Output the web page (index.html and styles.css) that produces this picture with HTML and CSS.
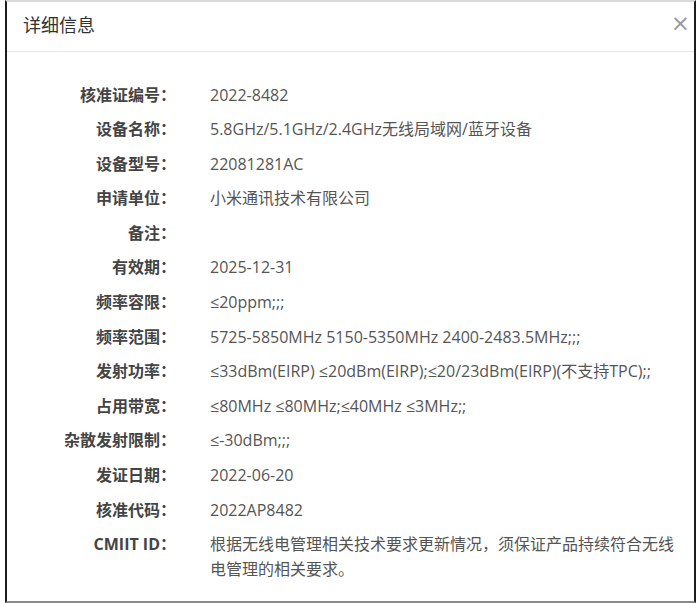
FILE: index.html
```html
<!DOCTYPE html>
<html lang="zh-CN">
<head>
  <meta charset="UTF-8">
  <title>详细信息</title>
  <link rel="stylesheet" href="styles.css">
</head>
<body>
  <div class="dialog">
    <div class="dialog-header">
      <h2>详细信息</h2>
      <span class="close">&times;</span>
    </div>
    <div class="dialog-body">
      <div class="label">核准证编号：</div>
      <div class="value">2022-8482</div>

      <div class="label">设备名称：</div>
      <div class="value">5.8GHz/5.1GHz/2.4GHz无线局域网/蓝牙设备</div>

      <div class="label">设备型号：</div>
      <div class="value">22081281AC</div>

      <div class="label">申请单位：</div>
      <div class="value">小米通讯技术有限公司</div>

      <div class="label">备注：</div>
      <div class="value"></div>

      <div class="label">有效期：</div>
      <div class="value">2025-12-31</div>

      <div class="label">频率容限：</div>
      <div class="value">≤20ppm;;;</div>

      <div class="label">频率范围：</div>
      <div class="value">5725-5850MHz 5150-5350MHz 2400-2483.5MHz;;;</div>

      <div class="label">发射功率：</div>
      <div class="value">≤33dBm(EIRP) ≤20dBm(EIRP);≤20/23dBm(EIRP)(不支持TPC);;</div>

      <div class="label">占用带宽：</div>
      <div class="value">≤80MHz ≤80MHz;≤40MHz ≤3MHz;;</div>

      <div class="label">杂散发射限制：</div>
      <div class="value">≤-30dBm;;;</div>

      <div class="label">发证日期：</div>
      <div class="value">2022-06-20</div>

      <div class="label">核准代码：</div>
      <div class="value">2022AP8482</div>

      <div class="label">CMIIT ID：</div>
      <div class="value">根据无线电管理相关技术要求更新情况，须保证产品持续符合无线电管理的相关要求。</div>
    </div>
  </div>
</body>
</html>
```

FILE: styles.css
```css
body {
  margin: 0;
  background: #fff;
  font-family: "Open Sans", "Noto Sans", "DejaVu Sans", "Noto Sans CJK SC", sans-serif;
}
.dialog {
  box-sizing: border-box;
  margin-left: 5px;
  width: 691px;
  height: 603px;
  background: white;
  border-top: 2px solid #d8d8d8;
  border-left: 2px solid #1c1c1c;
  border-right: 2px solid #1c1c1c;
  border-bottom: 2px solid #8a8a8a;
}
.dialog-header {
  display: flex;
  justify-content: space-between;
  align-items: center;
  height: 50px;
  padding: 0 4px 6px 16px;
  box-sizing: border-box;
  border-bottom: 1px solid #e6e6e6;
}
.dialog-header h2 {
  margin: 0;
  font-size: 18px;
  font-weight: normal;
  color: #333;
}
.close {
  font-family: "DejaVu Sans", sans-serif;
  font-size: 23px;
  color: #999;
  line-height: 1;
}
.dialog-body {
  display: grid;
  grid-template-columns: 169px 476px;
  column-gap: 34px;
  row-gap: 9.6px;
  padding-top: 30.5px;
  font-size: 16px;
  line-height: 25px;
}
.label {
  text-align: right;
  font-weight: bold;
  color: #444;
}
.value {
  color: #555;
}
```
